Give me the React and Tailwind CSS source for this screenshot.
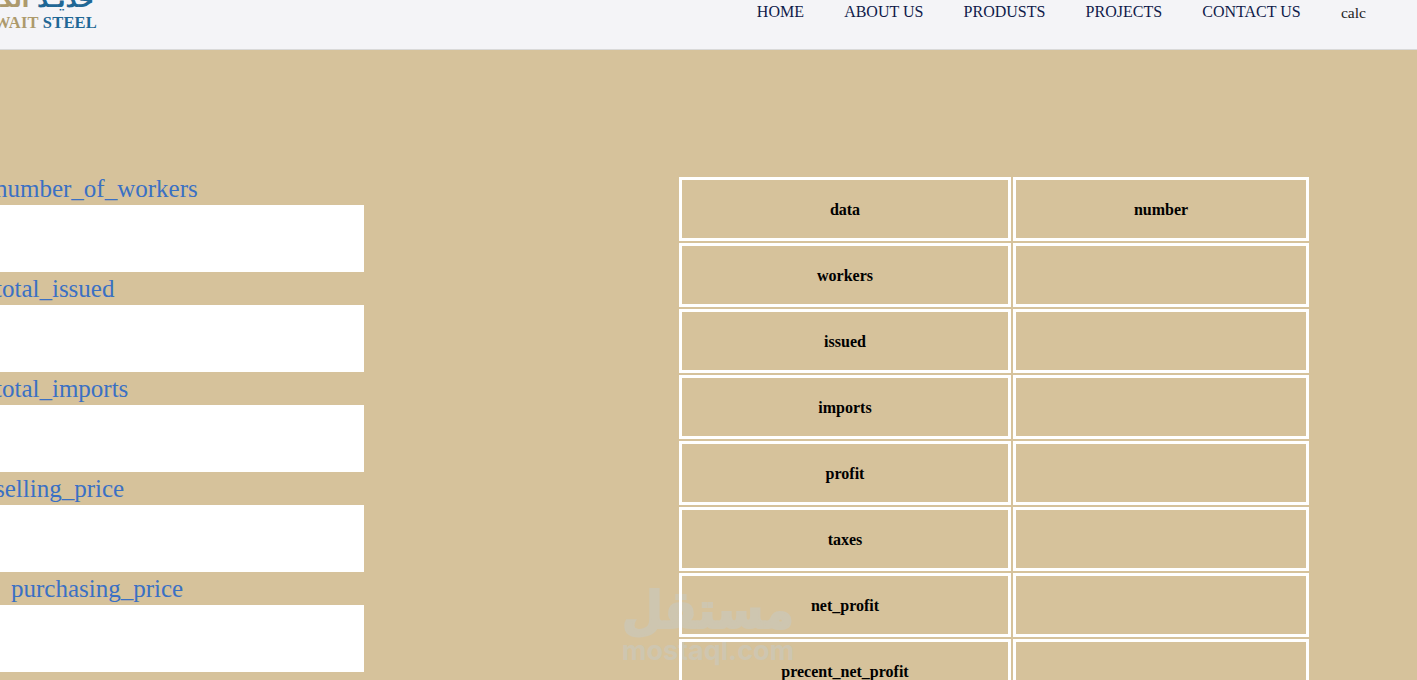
const fields = [
  { label: 'number_of_workers', shift: '-ml-[5px]' },
  { label: 'total_issued', shift: '-ml-[5px]' },
  { label: 'total_imports', shift: '-ml-[5px]' },
  { label: 'selling_price', shift: '-ml-[5px]' },
  { label: 'purchasing_price', shift: 'ml-[11px]' },
];

const rows = ['workers', 'issued', 'imports', 'profit', 'taxes', 'net_profit', 'precent_net_profit'];

const navLinks = ['HOME', 'ABOUT US', 'PRODUSTS', 'PROJECTS', 'CONTACT US'];

const App = () => {
  return (
    <div className="relative h-[680px] overflow-hidden bg-[#d6c29b] font-['Liberation_Serif',serif]">
      {/* watermark */}
      <div className="pointer-events-none absolute left-[622px] top-[590px] flex w-[172px] flex-col items-center text-[#cec6b0]">
        <div className="h-[50px] scale-y-[1.1] font-['DejaVu_Sans',sans-serif] text-[47px] leading-[42px] font-bold [-webkit-text-stroke:2px_#cec6b0]">مستقل</div>
        <div className="whitespace-nowrap font-['Inter',sans-serif] text-[27px] leading-[22px] font-bold">mostaql.com</div>
      </div>

      <header className="relative flex h-[50px] justify-between border-b border-[#d9d9d9] bg-[#f4f4f7]">
        <div className="-mt-[11px] flex w-[97px] flex-col items-end">
          <div dir="rtl" className="mr-[3px] h-[22px] whitespace-nowrap font-['DejaVu_Sans',sans-serif] text-[22px] leading-[22px] font-bold">
            <span className="text-[#1f6795]">حديـد</span> <span className="text-[#ad9a6c]">الكويت</span>
          </div>
          <div className="mt-[2px] whitespace-nowrap text-[16.5px] leading-[20px] font-bold tracking-[0.2px] text-[#ad9a6c]">
            KUWAIT <span className="text-[#1f6795]">STEEL</span>
          </div>
        </div>
        <nav className="mr-[51px] flex gap-[40.2px] pt-[3px] text-[16px] leading-[18px] text-[#0f1a4a]">
          {navLinks.map((link) => (
            <a key={link} href="#" className="block">{link}</a>
          ))}
          <a href="#" className="block pt-[1px] text-[15.6px] text-[#222222]">calc</a>
        </nav>
      </header>

      <main className="relative flex pt-[122px]">
        <form className="w-[679px]">
          {fields.map((field) => (
            <div key={field.label}>
              <label className={`block h-[33px] text-[25px] leading-[33px] whitespace-nowrap text-[#3a70c4] ${field.shift}`}>
                {field.label}
              </label>
              <input type="text" className="block h-[67px] w-[364px] bg-white" />
            </div>
          ))}
        </form>

        <div className="shrink-0 pt-[5px]">
          <div className="grid grid-cols-[332px_296px] gap-[2px] text-[16px] font-bold text-black">
            <div className="flex h-[64px] items-center justify-center border-[3px] border-white pt-[1px]">data</div>
            <div className="flex h-[64px] items-center justify-center border-[3px] border-white pt-[1px]">number</div>
            {rows.map((row) => (
              <div key={row} className="contents">
                <div className="flex h-[64px] items-center justify-center border-[3px] border-white pt-[1px]">{row}</div>
                <div className="h-[64px] border-[3px] border-white"></div>
              </div>
            ))}
          </div>
        </div>
      </main>
    </div>
  );
};

export default App;
